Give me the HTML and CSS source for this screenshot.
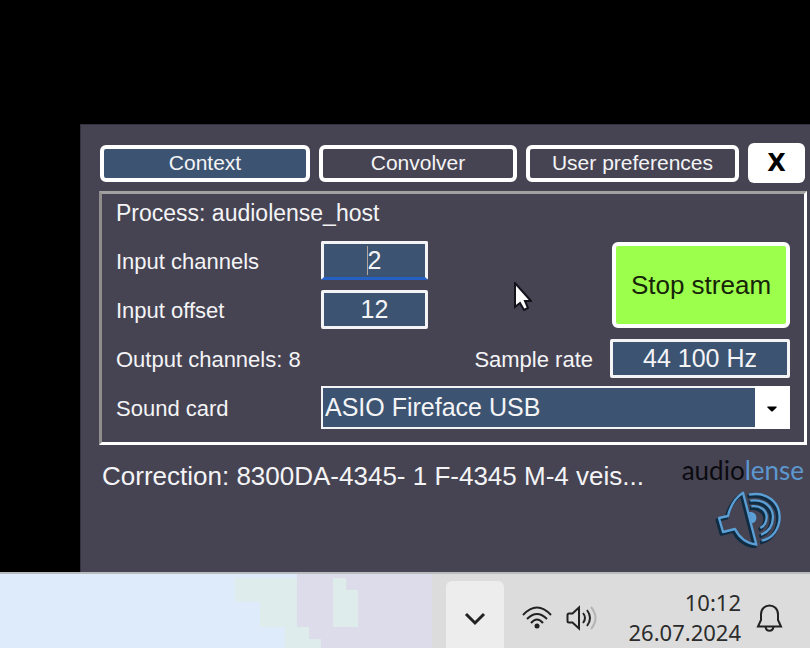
FILE: index.html
```html
<!DOCTYPE html>
<html lang="en">
<head>
<meta charset="utf-8">
<meta name="viewport" content="width=device-width, initial-scale=1">
<title>Audiolense host</title>
<link rel="stylesheet" href="styles.css">
</head>
<body>
<main class="desktop">
  <section class="window">
    <nav class="tabs">
      <button class="tab tab-active" type="button">Context</button>
      <button class="tab" type="button">Convolver</button>
      <button class="tab" type="button">User preferences</button>
      <button class="close" type="button">X</button>
    </nav>

    <form class="group">
      <p class="process">Process: audiolense_host</p>

      <label class="label" for="channels">Input channels</label>
      <div class="field-wrap">
        <input class="field field-focus" id="channels" type="text" value="2">
        <span class="caret"></span>
      </div>
      <button class="stream" type="button">Stop stream</button>

      <label class="label label-first" for="offset">Input offset</label>
      <input class="field" id="offset" type="text" value="12">

      <p class="label outputs">Output channels: 8</p>
      <label class="label rate-label" for="rate">Sample rate</label>
      <input class="field" id="rate" type="text" value="44 100 Hz">

      <label class="label" for="card">Sound card</label>
      <div class="combo">
        <select class="combo-select" id="card"><option>ASIO Fireface USB</option></select>
        <svg class="combo-arrow" viewBox="0 0 34 42" aria-hidden="true"><path d="M12 20h9v1l-4 4h-1l-4-4z"/></svg>
      </div>
    </form>

    <footer class="footer">
      <p class="correction">Correction: 8300DA-4345- 1 F-4345 M-4 veis...</p>
      <div class="brand">
        <p class="brand-name">audio<span class="brand-tail">lense</span></p>
        <svg class="brand-icon" viewBox="18 16 201 174" aria-hidden="true">
          <defs>
            <g id="speaker">
              <path d="M30 100L57 94Q68 46 102 24L142 180Q98 174 78 133L42 142z"/>
              <path d="M120 30C170 20 212 50 212 98C211 134 190 162 158 168M124 48C162 42 192 64 192 98C191 124 178 142 156 150M127 65C154 62 173 76 173 98C172 114 166 124 154 130"/>
            </g>
          </defs>
          <use class="brand-shade" href="#speaker" x="-5" y="6"/>
          <use class="brand-line" href="#speaker"/>
          <path class="brand-dot" d="M120 82C146 78 150 112 128 116z"/>
        </svg>
      </div>
    </footer>
  </section>
  <svg class="pointer" viewBox="0 0 18 29" aria-hidden="true"><path d="M1 1v24l5-4 4 7 4-2-3-7h6z"/></svg>
</main>

<footer class="taskbar">
  <svg class="wallpaper" viewBox="0 0 432 74" aria-hidden="true" shape-rendering="crispEdges">
    <path fill="#deebfb" d="M0 0h432v74H0z"/>
    <path fill="#dddceb" d="M297 0h135v74H321v-9h-12V53h-12z"/>
    <path fill="#deeceb" d="M235 4h62v49h12v12h12v9h-36V53h-25V28h-25zM333 4h13v12h12v37h-25z"/>
  </svg>
  <button class="tray-more" type="button" aria-label="Show hidden icons">
    <svg class="chevron" viewBox="0 0 22 14" aria-hidden="true"><path d="M2 2l9 9 9-9"/></svg>
  </button>
  <svg class="wifi" viewBox="0 0 32 24" aria-hidden="true">
    <path d="M2 10Q16-5 30 10M6 14q10-10 20 0M10 18q6-7 12 0"/><circle cx="16" cy="21" r="2.500"/>
  </svg>
  <svg class="volume" viewBox="0 0 32 26" aria-hidden="true">
    <path d="M3 8.500h3.500L13 2.500v21L6.500 17.500H3q-1.500 0-1.500-1.500V10q0-1.500 1.500-1.500zM17 8q4 5 0 10M21 5q6 8 0 16"/><path class="faint" d="M25 2q9 11 0 22"/>
  </svg>
  <p class="clock"><time>10:12</time><time>26.07.2024</time></p>
  <svg class="bell" viewBox="0 0 28 30" aria-hidden="true">
    <path d="M2 23.500L5 17v-5.500c0-12 17-12 17 0V17l3 6.500zM9.500 24c1 5 7 5 8 0"/>
  </svg>
</footer>
</body>
</html>
```
FILE: styles.css
```css
* {
  box-sizing: border-box;
}

body {
  display: flex;
  flex-direction: column;
  min-height: 100vh;
  margin: 0;
  background: #000;
  color: #f4f4f6;
  font-family: "Liberation Sans", Arial, sans-serif;
}

p {
  margin: 0;
}

button,
input,
select {
  margin: 0;
  color: inherit;
  font-family: inherit;
}

.desktop {
  position: relative;
  display: flex;
  flex: 1;
  padding: 124px 0 0 80px;
}

.window {
  flex: 1;
  min-width: 0;
  padding: 18px 3px 0 18px;
  border-top: 1px solid #33323f;
  border-left: 1px solid #33323f;
  background: #464453;
}

.tabs {
  display: grid;
  grid-template-columns: 210fr 198fr 213fr 57fr;
  gap: 9px;
  align-items: center;
  margin: 0 2px 8px 1px;
}

.tab {
  height: 37px;
  padding: 0;
  border: 4px solid #fff;
  border-radius: 6px;
  background: transparent;
  font-size: 21px;
  line-height: 28px;
}

.tab-active {
  background: #3c5472;
}

.close {
  height: 40px;
  padding: 0;
  border: 0;
  border-radius: 6px;
  background: #fff;
  color: #000;
  font-family: "DejaVu Sans", sans-serif;
  font-size: 24px;
  font-weight: bold;
}

.group {
  display: grid;
  grid-template-columns: 205px 107px 1fr 180px;
  grid-template-rows: 42px repeat(4, 49px);
  align-items: center;
  padding: 0 14px 10px 14px;
  border: 3px solid;
  border-color: #a3a19f #fff #fff #8f8e8d;
}

.process {
  grid-column: 1 / -1;
  align-self: start;
  font-size: 23px;
  line-height: 38px;
}

.label {
  padding-top: 2px;
  font-size: 22px;
  line-height: 40px;
}

.label-first {
  grid-column: 1;
}

.field-wrap {
  position: relative;
  display: flex;
}

.field {
  width: 100%;
  height: 39px;
  padding: 0;
  border: 3px solid #f4f4f6;
  border-radius: 2px;
  outline: 0;
  background: #3c5472;
  font-size: 25px;
  text-align: center;
}

.field-focus {
  border-bottom-color: #2560c4;
}

.caret {
  position: absolute;
  top: 5px;
  bottom: 5px;
  left: 46px;
  width: 1px;
  background: #b5a79c;
}

.stream {
  grid-row: 2 / 4;
  grid-column: 4;
  height: 86px;
  margin-left: 2px;
  padding: 0;
  border: 4px solid #fff;
  border-radius: 6px;
  background: #9cff4b;
  color: #162408;
  font-size: 26px;
}

.outputs {
  grid-column: 1 / 3;
}

.rate-label {
  justify-self: end;
  padding-right: 17px;
}

.combo {
  position: relative;
  display: flex;
  grid-column: 2 / -1;
}

.combo-select {
  width: 100%;
  height: 43px;
  padding: 0 36px 2px 2px;
  border: 2px solid #f4f4f6;
  border-radius: 0;
  appearance: none;
  background: #3c5472;
  font-size: 25px;
}

.combo-arrow {
  position: absolute;
  top: 0;
  right: 0;
  width: 35px;
  height: 43px;
  background: #fff;
  pointer-events: none;
}

.footer {
  display: flex;
  justify-content: space-between;
  padding: 12px 3px 0;
}

.correction {
  font-size: 26px;
  line-height: 38px;
}

.brand {
  display: flex;
  flex-direction: column;
  align-items: center;
}

.brand-name {
  color: #0a0a10;
  font-family: Lato, sans-serif;
  font-size: 26px;
  line-height: 26px;
}

.brand-tail {
  color: #5c97cf;
}

.brand-icon {
  width: 67px;
  height: 58px;
  margin: 7px 0 0 12px;
}

.brand-shade,
.brand-line {
  fill: none;
  stroke: #102c43;
  stroke-linejoin: round;
  stroke-width: 11;
}

.brand-line {
  stroke: #5a9fd6;
  stroke-width: 7;
}

.brand-dot {
  fill: #5a9fd6;
}

.pointer {
  position: absolute;
  top: 282px;
  left: 514px;
  width: 18px;
  height: 29px;
  fill: #fff;
  stroke: #14131c;
  stroke-width: 2;
}

.taskbar {
  position: relative;
  display: flex;
  justify-content: flex-end;
  height: 76px;
  padding-right: 26px;
  border-top: 2px solid #b9bcbf;
  background: #dcdcdc;
  color: #2b2b2b;
  fill: none;
  stroke: #222;
  stroke-width: 2;
}

.wallpaper {
  position: absolute;
  top: 0;
  left: 0;
  width: 432px;
  height: 74px;
  stroke: none;
}

.tray-more {
  display: flex;
  align-items: center;
  justify-content: center;
  width: 58px;
  margin: 7px 17px 0 0;
  padding: 8px 0 0;
  border: 0;
  border-radius: 6px 6px 0 0;
  background: #ededed;
}

.chevron {
  width: 22px;
  height: 14px;
  stroke-width: 3;
}

.wifi {
  width: 32px;
  height: 24px;
  margin: 31px 13px 0 0;
}

.wifi circle {
  fill: #222;
  stroke: none;
}

.volume {
  width: 32px;
  height: 26px;
  margin: 31px 31px 0 0;
}

.faint {
  stroke: #b4b4b4;
}

.clock {
  display: flex;
  flex-direction: column;
  margin: 13px 15px 0 0;
  font-family: "Noto Sans", sans-serif;
  font-size: 22px;
  line-height: 30px;
  text-align: right;
}

.bell {
  width: 28px;
  height: 30px;
  margin-top: 29px;
}
```
